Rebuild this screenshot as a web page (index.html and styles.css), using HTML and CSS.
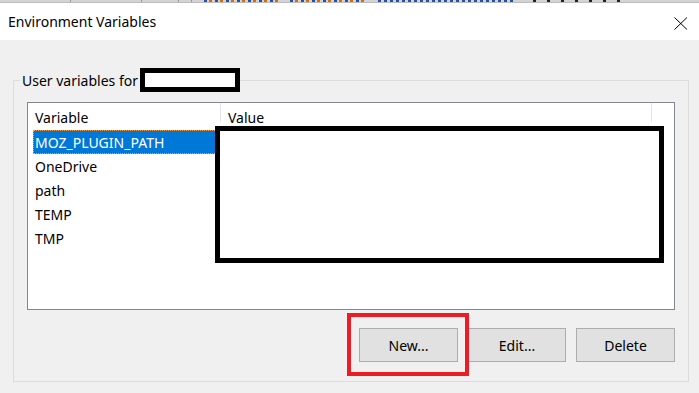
FILE: index.html
```html
<!DOCTYPE html>
<html lang="en">
<head>
    <meta charset="UTF-8">
    <meta name="viewport" content="width=device-width, initial-scale=1.0">
    <title>Environment Variables</title>
    <link rel="stylesheet" href="styles.css">
</head>
<body>
    <div class="backdrop">
        <span class="cell"></span>
        <span class="cell"></span>
        <span class="cell short"></span>
        <span class="cell tiny"></span>
        <span class="ghost mixed"></span>
        <span class="ghost mixed"></span>
        <span class="ghost blue"></span>
        <span class="ghost big"></span>
    </div>
    <div class="dialog">
        <div class="titlebar">
            <span class="title">Environment Variables</span>
            <svg class="close" width="14" height="13" viewBox="0 0 14 13">
                <path d="M0.5 0.5 L13 12.5 M13 0.5 L0.5 12.5" stroke="#000" stroke-width="1" fill="none"/>
            </svg>
        </div>
        <div class="body">
            <fieldset class="group">
                <legend class="group-label">User variables for <span class="redact-inline"></span></legend>
                <div class="listview">
                    <div class="list-head">
                        <div class="col col-name">Variable</div>
                        <div class="col col-value">Value</div>
                        <div class="col col-rest"></div>
                    </div>
                    <div class="row selected"><span class="cell-name">MOZ_PLUGIN_PATH</span></div>
                    <div class="row"><span class="cell-name">OneDrive</span></div>
                    <div class="row"><span class="cell-name">path</span></div>
                    <div class="row"><span class="cell-name">TEMP</span></div>
                    <div class="row"><span class="cell-name">TMP</span></div>
                    <div class="redact-values"></div>
                </div>
                <div class="buttons">
                    <button class="btn">New...</button>
                    <button class="btn">Edit...</button>
                    <button class="btn">Delete</button>
                    <div class="highlight"></div>
                </div>
            </fieldset>
        </div>
    </div>
</body>
</html>
```

FILE: styles.css
```css
body {
    margin: 0;
    width: 699px;
    height: 393px;
    overflow: hidden;
    background: #f0f0f0;
    font-family: "Noto Sans", "Open Sans", sans-serif;
    font-size: 14px;
    color: #000;
}
/* sliver of the window behind the dialog */
.backdrop {
    height: 3px;
    overflow: hidden;
    display: flex;
    align-items: flex-start;
    background: #d4d4d4;
    border-bottom: 1px solid #bcbcbc;
    box-sizing: border-box;
}
.cell {
    width: 70px;
    height: 3px;
    border-right: 1px solid #9a9a9a;
}
.cell.short { width: 36px; }
.cell.tiny { width: 12px; }
.ghost {
    height: 2px;
    width: 74px;
    margin-left: 12px;
    background: repeating-linear-gradient(90deg, #2255aa 0 3px, transparent 3px 5px, #d86a10 5px 8px, transparent 8px 11px);
}
.ghost.blue {
    width: 135px;
    margin-left: 14px;
    background: repeating-linear-gradient(90deg, #2255aa 0 3px, transparent 3px 6px);
}
.ghost.big {
    width: 95px;
    height: 3px;
    margin-left: 20px;
    background: repeating-linear-gradient(90deg, #222 0 3px, transparent 3px 14px);
}
.dialog {
    display: flex;
    flex-direction: column;
}
.titlebar {
    height: 37px;
    background: #fff;
    display: flex;
    align-items: center;
    justify-content: space-between;
    padding: 0 11px 0 8px;
}
.title {
    font-size: 14px;
}
.close {
    display: block;
    margin-top: 3px;
}
.body {
    padding: 28px 10px 0 13px;
}
.group {
    margin: 0;
    width: 676px;
    height: 314px;
    box-sizing: border-box;
    border: 1px solid #dcdcdc;
    padding: 10px 13px 0 13px;
}
.group-label {
    margin-left: -7px;
    padding: 0 0 0 2px;
    display: flex;
    align-items: center;
    height: 24px;
}
.redact-inline {
    display: inline-block;
    width: 100px;
    height: 24px;
    box-sizing: border-box;
    border: 5px solid #000;
    background: #fff;
    margin-left: 2px;
}
.listview {
    position: relative;
    height: 208px;
    box-sizing: border-box;
    border: 1px solid #828790;
    background: #fff;
}
.list-head {
    display: flex;
    height: 27px;
}
.col {
    padding: 5px 0 0 7px;
    box-sizing: border-box;
}
.col-name {
    width: 193px;
    border-right: 1px solid #e5e5e5;
    height: 19px;
}
.col-value {
    width: 431px;
    border-right: 1px solid #e5e5e5;
    height: 19px;
}
.row {
    height: 24px;
    margin-left: 5px;
    width: 188px;
    display: flex;
    align-items: center;
    padding-left: 2px;
    box-sizing: border-box;
}
.row.selected {
    background: #0078d7;
    color: #fff;
    outline: 1px dotted #f0a050;
    outline-offset: -1px;
}
.redact-values {
    position: absolute;
    left: 187px;
    top: 23px;
    width: 449px;
    height: 137px;
    box-sizing: border-box;
    border: 5px solid #000;
    background: #fff;
}
.buttons {
    position: relative;
    display: flex;
    justify-content: flex-end;
    gap: 10px;
    margin-top: 18px;
}
.btn {
    width: 99px;
    height: 34px;
    background: #e1e1e1;
    border: 1px solid #adadad;
    font-family: inherit;
    font-size: 14px;
    color: #000;
    padding: 0;
}
.btn:nth-child(2) { width: 98px; }
.highlight {
    position: absolute;
    left: 320px;
    top: -15px;
    width: 122px;
    height: 63px;
    box-sizing: border-box;
    border: 4px solid #ed1c24;
}
```
